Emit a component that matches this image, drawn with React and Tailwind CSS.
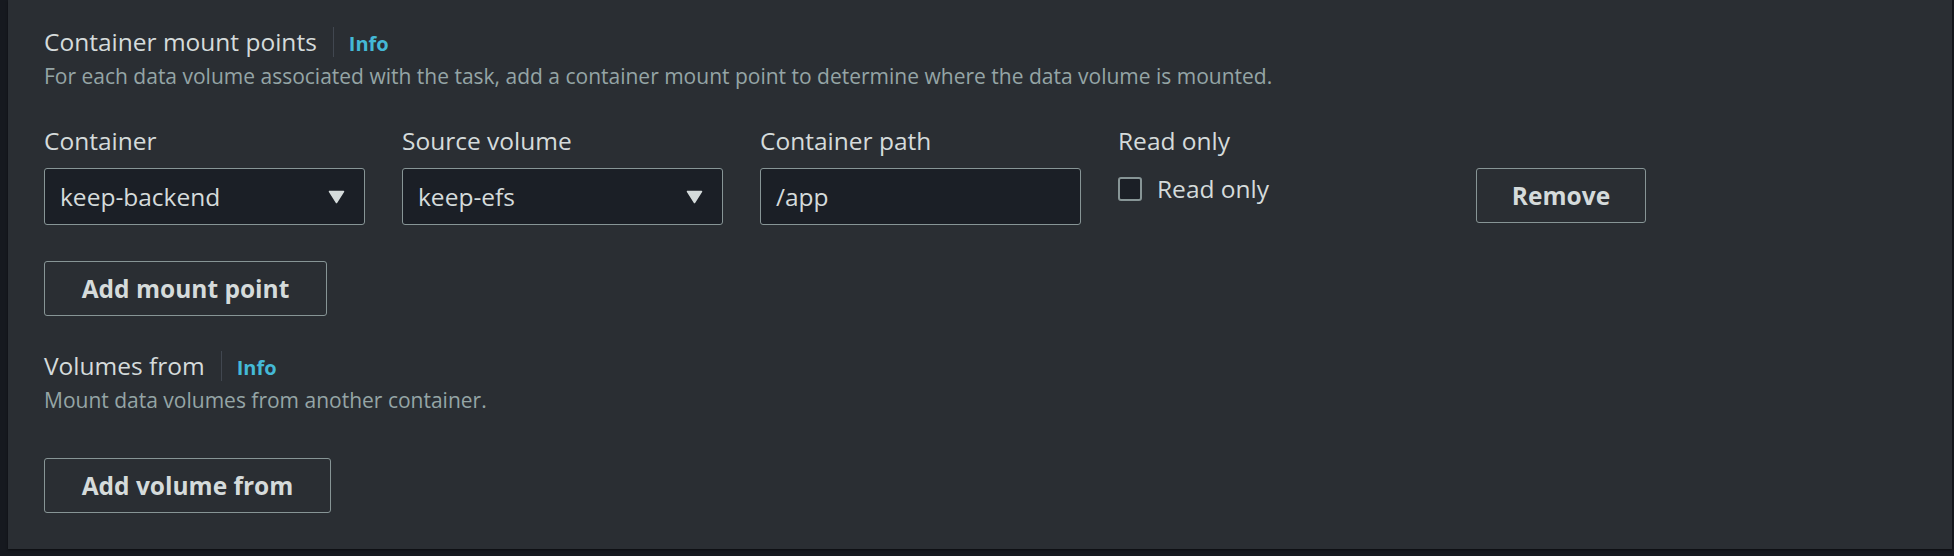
import React from "react";

const font = { fontFamily: "'Open Sans', Lato, sans-serif" };

function Caret() {
  return (
    <svg width="17" height="14" viewBox="0 0 17 14" className="shrink-0">
      <path d="M1.5 1.5 L15.5 1.5 L8.5 12.5 Z" fill="#d5dbdb" stroke="#d5dbdb" strokeWidth="1.5" strokeLinejoin="round" />
    </svg>
  );
}

function Select({ value }) {
  return (
    <div className="flex h-[57px] w-[321px] items-center justify-between rounded-[3px] border border-[#879596] bg-[#1b1f26] pl-[15px] pr-[19px]">
      <span className="text-[24.5px] leading-[30px] text-[#d5dbdb]">{value}</span>
      <Caret />
    </div>
  );
}

function Header({ title }) {
  return (
    <div className="flex items-start">
      <span className="text-[24.5px] leading-[30px] text-[#d5dbdb]">{title}</span>
      <div className="ml-4 h-[30px] w-px bg-[#414750]" />
      <span className="ml-[15px] mt-[2px] text-[20px] font-bold leading-[30px] text-[#44b9d6]">Info</span>
    </div>
  );
}

function Label({ children }) {
  return <div className="text-[24.5px] leading-[30px] text-[#d5dbdb]">{children}</div>;
}

function Button({ children, className = "" }) {
  return (
    <button
      className={
        "flex h-[55px] items-center justify-center rounded-[3px] border border-[#879596] bg-transparent text-[24.5px] font-bold leading-[30px] text-[#d5dbdb] " +
        className
      }
    >
      {children}
    </button>
  );
}

export default function App() {
  return (
    <div className="h-[556px] w-full bg-[#16191f]" style={font}>
      <div className="ml-[8px] h-[549px] w-[1944px] bg-[#2a2e33] pl-[36px] pt-[27px] shadow-[0_1px_2px_rgba(0,0,0,0.5)]">
        <Header title="Container mount points" />
        <div className="mt-[5px] text-[21px] leading-[24px] text-[#95a5a6]">
          For each data volume associated with the task, add a container mount point to determine where the data volume is mounted.
        </div>

        <div className="mt-[38px] grid grid-cols-[321px_321px_321px_321px_170px] gap-x-[37px] gap-y-[12px]">
          <Label>Container</Label>
          <Label>Source volume</Label>
          <Label>Container path</Label>
          <Label>Read only</Label>
          <div />

          <Select value="keep-backend" />
          <Select value="keep-efs" />
          <div className="flex h-[57px] w-[321px] items-center rounded-[3px] border border-[#879596] bg-[#1b1f26] pl-[15px]">
            <span className="text-[24.5px] leading-[30px] text-[#d5dbdb]">/app</span>
          </div>
          <div className="mt-[9px] flex h-[24px] items-center">
            <div className="h-[24px] w-[24px] rounded-[3px] border-2 border-[#879596] bg-[#1b1f26]" />
            <span className="ml-[15px] text-[24.5px] leading-[30px] text-[#d5dbdb]">Read only</span>
          </div>
          <Button className="w-[170px]">Remove</Button>
        </div>

        <Button className="mt-[36px] w-[283px]">Add mount point</Button>

        <div className="mt-[35px]">
          <Header title="Volumes from" />
        </div>
        <div className="mt-[5px] text-[21px] leading-[24px] text-[#95a5a6]">
          Mount data volumes from another container.
        </div>

        <Button className="mt-[46px] w-[287px]">Add volume from</Button>
      </div>
    </div>
  );
}
